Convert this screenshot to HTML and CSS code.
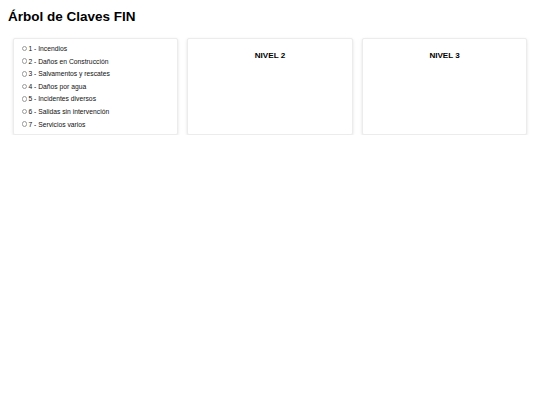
FILE: index.html
```html
<!DOCTYPE html>
<html lang="es">
<head>
<meta charset="utf-8">
<title>Árbol de Claves FIN</title>
<link rel="stylesheet" href="styles.css">
</head>
<body>
<h1 class="title">Árbol de Claves FIN</h1>
<div class="levels">
  <div class="panel">
    <ul class="options">
      <li class="option"><span class="radio"></span>1 - Incendios</li>
      <li class="option"><span class="radio"></span>2 - Daños en Construcción</li>
      <li class="option"><span class="radio"></span>3 - Salvamentos y rescates</li>
      <li class="option"><span class="radio"></span>4 - Daños por agua</li>
      <li class="option"><span class="radio"></span>5 - Incidentes diversos</li>
      <li class="option"><span class="radio"></span>6 - Salidas sin intervención</li>
      <li class="option"><span class="radio"></span>7 - Servicios varios</li>
    </ul>
  </div>
  <div class="panel">
    <div class="panel-title">NIVEL 2</div>
  </div>
  <div class="panel">
    <div class="panel-title">NIVEL 3</div>
  </div>
</div>
</body>
</html>
```

FILE: styles.css
```css
html, body {
  background: #ffffff;
}
body {
  margin: 0;
  padding: 0 8px;
  font-family: "Liberation Sans", Arial, sans-serif;
  color: #000;
}
.title {
  font-size: 13.5px;
  font-weight: bold;
  line-height: 15.5px;
  margin: 9.4px 0 0;
}
.levels {
  display: grid;
  grid-template-columns: 1fr 1fr 1fr;
  column-gap: 9.2px;
  padding: 0 4.7px;
  margin-top: 13.6px;
}
.panel {
  border: 1px solid #ececec;
  border-radius: 2px;
  box-shadow: 0 1px 3px rgba(0, 0, 0, 0.12);
  background: #fff;
  padding: 2.8px 8px 3.6px;
  box-sizing: border-box;
  min-height: 97px;
}
.options {
  list-style: none;
  margin: 0;
  padding: 0;
}
.option {
  display: flex;
  align-items: center;
  height: 12.6px;
  font-size: 6.75px;
  color: #111;
}
.radio {
  width: 5.6px;
  height: 5.6px;
  border: 0.6px solid #9a9a9a;
  border-radius: 50%;
  box-sizing: border-box;
  margin-right: 1.2px;
  flex: none;
}
.panel-title {
  text-align: center;
  font-size: 8.1px;
  font-weight: bold;
  line-height: 9.3px;
  margin-top: 8.6px;
}
```
